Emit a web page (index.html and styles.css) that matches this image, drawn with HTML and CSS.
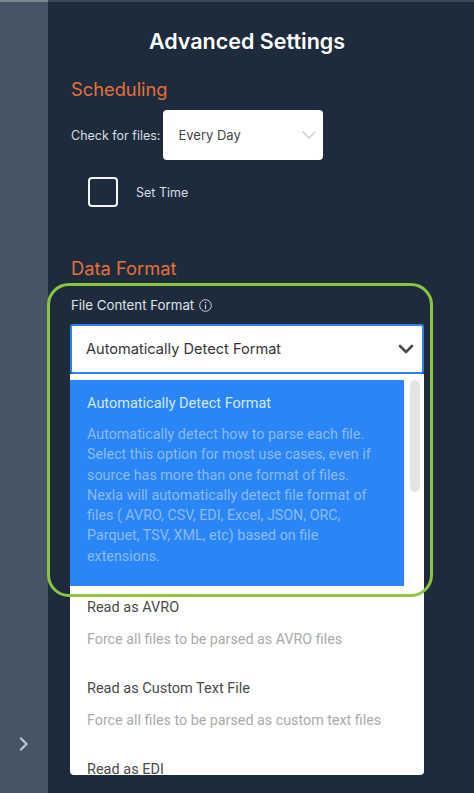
FILE: index.html
```html
<!DOCTYPE html>
<html>
<head>
<meta charset="utf-8">
<link rel="stylesheet" href="styles.css">
</head>
<body>
<div class="app">
  <aside class="sidebar">
    <svg class="side-chevron" width="10" height="14" viewBox="0 0 10 14"><path d="M2 1.5 L7.5 7 L2 12.5" fill="none" stroke="#b8c1cb" stroke-width="2.4" stroke-linecap="round" stroke-linejoin="round"/></svg>
  </aside>
  <main class="main">
    <h1 class="title">Advanced Settings</h1>
    <h2 class="section">Scheduling</h2>
    <div class="check-row">
      <span class="label">Check for files:</span>
      <div class="small-select">
        <span>Every Day</span>
        <svg width="14" height="8" viewBox="0 0 14 8"><path d="M1 1 L7 7 L13 1" fill="none" stroke="#cfcfcf" stroke-width="1.6" stroke-linecap="round" stroke-linejoin="round"/></svg>
      </div>
    </div>
    <div class="time-row">
      <span class="checkbox"></span>
      <span class="label">Set Time</span>
    </div>
    <h2 class="section section-data">Data Format</h2>
    <div class="field-label">File Content Format
      <svg class="info" width="13" height="13" viewBox="0 0 13 13"><circle cx="6.5" cy="6.5" r="5.8" fill="none" stroke="#cfd5dc" stroke-width="1"/><path d="M6.5 5.5 V10" stroke="#cfd5dc" stroke-width="1.1"/><circle cx="6.5" cy="3.6" r="0.75" fill="#cfd5dc"/></svg>
    </div>
    <div class="big-select">
      <span>Automatically Detect Format</span>
      <svg width="16" height="10" viewBox="0 0 16 10"><path d="M2 2 L8 8 L14 2" fill="none" stroke="#4a4a4a" stroke-width="2.6" stroke-linecap="round" stroke-linejoin="round"/></svg>
    </div>
    <div class="menu">
      <div class="options">
        <div class="option active">
          <div class="opt-title">Automatically Detect Format</div>
          <div class="opt-desc">Automatically detect how to parse each file. Select this option for most use cases, even if source has more than one format of files. Nexla will automatically detect file format of files ( AVRO, CSV, EDI, Excel, JSON, ORC, Parquet, TSV, XML, etc) based on file extensions.</div>
        </div>
        <div class="option">
          <div class="opt-title">Read as AVRO</div>
          <div class="opt-desc">Force all files to be parsed as AVRO files</div>
        </div>
        <div class="option">
          <div class="opt-title">Read as Custom Text File</div>
          <div class="opt-desc">Force all files to be parsed as custom text files</div>
        </div>
        <div class="option">
          <div class="opt-title">Read as EDI</div>
        </div>
      </div>
      <div class="track"><div class="thumb"></div></div>
    </div>
  </main>
  <div class="highlight"></div>
</div>
</body>
</html>
```

FILE: styles.css
```css
html, body {
  margin: 0;
  padding: 0;
}
body {
  width: 474px;
  height: 793px;
  overflow: hidden;
  background: #1e2b3c;
  font-family: "Inter", "Liberation Sans", sans-serif;
}
.app {
  position: relative;
  display: flex;
  height: 793px;
}
.sidebar {
  width: 48px;
  flex: none;
  background: #465566;
  border-top: 2px solid #7c8792;
  box-sizing: border-box;
  display: flex;
  flex-direction: column;
  justify-content: flex-end;
  align-items: center;
  padding-bottom: 42px;
}
.main {
  flex: 1;
  background: #1e2b3c;
  border-top: 2px solid #3a4757;
  box-sizing: border-box;
  padding: 27px 50px 0 22px;
  display: flex;
  flex-direction: column;
}
.title {
  margin: 0;
  font-size: 21.5px;
  line-height: 24px;
  font-weight: 600;
  color: #ffffff;
  text-align: center;
}
.section {
  margin: 25px 0 0 1px;
  font-size: 18.3px;
  line-height: 22px;
  font-weight: 400;
  color: #e3703b;
}
.check-row {
  display: flex;
  align-items: center;
  margin-top: 10px;
  margin-left: 1px;
}
.label {
  font-size: 12.5px;
  color: #d9dee4;
}
.small-select {
  margin-left: 3px;
  width: 160px;
  height: 50px;
  background: #ffffff;
  border-radius: 4px;
  box-sizing: border-box;
  padding: 0 7px 0 15px;
  display: flex;
  align-items: center;
  justify-content: space-between;
  font-size: 13px;
  color: #454545;
}
.time-row {
  display: flex;
  align-items: center;
  gap: 18px;
  margin: 17px 0 0 18px;
}
.checkbox {
  width: 30px;
  height: 30px;
  box-sizing: border-box;
  border: 2.5px solid #f2f4f6;
  border-radius: 4px;
}
.section-data {
  margin-top: 50px;
}
.field-label {
  margin: 18px 0 0 1px;
  font-size: 13.3px;
  line-height: 16px;
  color: #dfe3e8;
  display: flex;
  align-items: center;
  gap: 5px;
}
.big-select {
  margin-top: 11px;
  height: 50px;
  box-sizing: border-box;
  border: 2px solid #2f80ef;
  border-radius: 3px;
  background: #ffffff;
  display: flex;
  align-items: center;
  justify-content: space-between;
  padding: 0 8px 0 14px;
  font-size: 14.6px;
  color: #343434;
}
.menu {
  height: 401px;
  background: #ffffff;
  border-radius: 0 0 4px 4px;
  overflow: hidden;
  display: flex;
  padding-top: 6px;
  box-sizing: border-box;
  font-family: "Roboto", "Liberation Sans", sans-serif;
}
.options {
  width: 334px;
  flex: none;
}
.option {
  padding: 13px 17px 19px;
}
.option.active {
  background: #2a85f7;
  padding: 15px 20px 20px 17px;
}
.opt-title {
  font-size: 14.5px;
  line-height: 18px;
  color: #4a4a4a;
}
.opt-desc {
  margin-top: 13px;
  font-size: 14.3px;
  line-height: 18px;
  color: #ababab;
}
.active .opt-title {
  color: #d6e6fb;
}
.active .opt-desc {
  margin-top: 11px;
  line-height: 20.3px;
  color: #8cbaf6;
}
.track {
  margin-left: 6px;
  width: 10px;
}
.thumb {
  height: 112px;
  background: #e3e4e6;
  border-radius: 5px;
}
.highlight {
  position: absolute;
  left: 47px;
  top: 283px;
  width: 386px;
  height: 314px;
  box-sizing: border-box;
  border: 3px solid #8cc640;
  border-radius: 22px;
  pointer-events: none;
}
```
